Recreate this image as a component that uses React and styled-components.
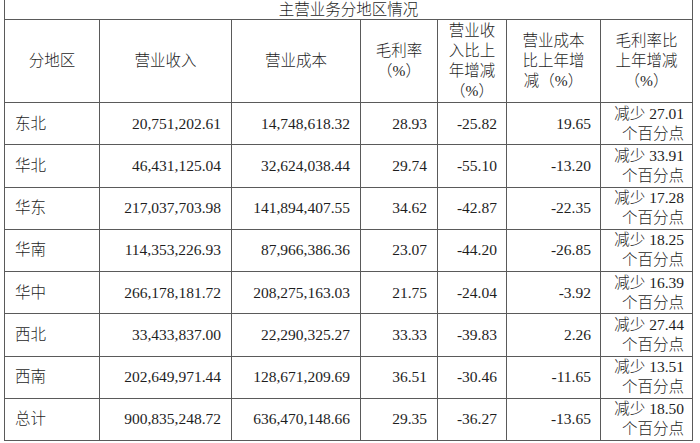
import React from "react";
import styled, { createGlobalStyle } from "styled-components";

const Global = createGlobalStyle`
  html, body { margin: 0; padding: 0; background: #ffffff; }
  body {
    font-family: "Liberation Serif", "Noto Sans CJK SC", serif;
    color: #1e1e1e;
  }
`;

const Page = styled.div`
  width: 700px;
  height: 443px;
  overflow: hidden;
  padding-left: 4px;
  box-sizing: border-box;
`;

const Table = styled.table`
  border-collapse: collapse;
  table-layout: fixed;
  width: 688px;
  font-size: 15.5px;
  line-height: 20px;
  font-weight: 300;
`;

const TitleCell = styled.td`
  height: 19px;
  padding: 0;
  text-align: center;
  vertical-align: middle;
  border: 1px solid #5a5a5a;
  border-top: none;
  line-height: 18px;
`;

const HeadCell = styled.th`
  font-weight: 300;
  height: 82px;
  padding: 0;
  text-align: center;
  vertical-align: middle;
  border: 1px solid #5a5a5a;
`;

const Row = styled.tr`
  height: 42.25px;
`;

const Cell = styled.td`
  padding: 0 ${(p) => (p.$align === "left" ? "0" : p.$pr || "10px")} 0
    ${(p) => (p.$align === "left" ? "10px" : "0")};
  text-align: ${(p) => p.$align || "right"};
  vertical-align: middle;
  border: 1px solid #5a5a5a;
  white-space: nowrap;
`;

const Note = styled.span`
  display: block;
  letter-spacing: ${(p) => p.$ls || "0"};
`;

const widths = [95, 132, 129, 77, 69, 94, 92];

const rows = [
  ["东北", "20,751,202.61", "14,748,618.32", "28.93", "-25.82", "19.65", "27.01"],
  ["华北", "46,431,125.04", "32,624,038.44", "29.74", "-55.10", "-13.20", "33.91"],
  ["华东", "217,037,703.98", "141,894,407.55", "34.62", "-42.87", "-22.35", "17.28"],
  ["华南", "114,353,226.93", "87,966,386.36", "23.07", "-44.20", "-26.85", "18.25"],
  ["华中", "266,178,181.72", "208,275,163.03", "21.75", "-24.04", "-3.92", "16.39"],
  ["西北", "33,433,837.00", "22,290,325.27", "33.33", "-39.83", "2.26", "27.44"],
  ["西南", "202,649,971.44", "128,671,209.69", "36.51", "-30.46", "-11.65", "13.51"],
  ["总计", "900,835,248.72", "636,470,148.66", "29.35", "-36.27", "-13.65", "18.50"],
];

const headers = [
  ["分地区"],
  ["营业收入"],
  ["营业成本"],
  ["毛利率", "（%）"],
  ["营业收", "入比上", "年增减", "（%）"],
  ["营业成本", "比上年增", "减（%）"],
  ["毛利率比", "上年增减", "（%）"],
];

export default function App() {
  return (
    <Page>
      <Global />
      <Table>
        <colgroup>
          {widths.map((w, i) => (
            <col key={i} style={{ width: w }} />
          ))}
        </colgroup>
        <tbody>
          <tr>
            <TitleCell colSpan={7}>主营业务分地区情况</TitleCell>
          </tr>
          <tr>
            {headers.map((lines, i) => (
              <HeadCell key={i}>
                {lines.map((l, j) => (
                  <Note key={j}>{l}</Note>
                ))}
              </HeadCell>
            ))}
          </tr>
          {rows.map((r) => (
            <Row key={r[0]}>
              <Cell $align="left">{r[0]}</Cell>
              <Cell>{r[1]}</Cell>
              <Cell>{r[2]}</Cell>
              <Cell>{r[3]}</Cell>
              <Cell $pr="9px">{r[4]}</Cell>
              <Cell $pr="9px">{r[5]}</Cell>
              <Cell $pr="8px">
                <Note>减少 {r[6]}</Note>
                <Note>个百分点</Note>
              </Cell>
            </Row>
          ))}
        </tbody>
      </Table>
    </Page>
  );
}
